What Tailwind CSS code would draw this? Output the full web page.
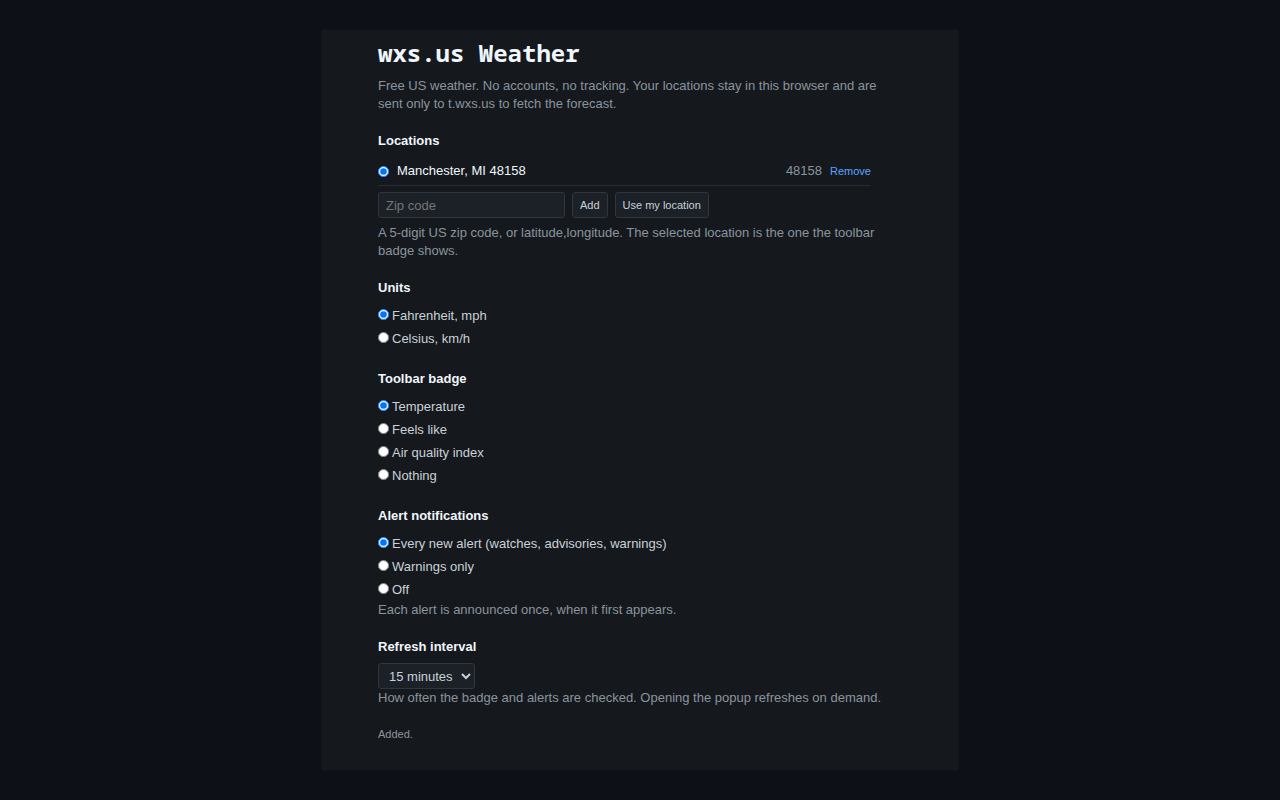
<!DOCTYPE html>
<html lang="en">
<head>
  <meta charset="UTF-8">
  <meta name="viewport" content="width=device-width, initial-scale=1.0">
  <title>wxs.us Weather</title>
  <script src="https://cdn.jsdelivr.net/npm/@tailwindcss/browser@4"></script>
</head>
<body class="bg-[#0d1017] text-[#c9d1d9] font-['Liberation_Sans',Arial,sans-serif] text-[13px] leading-[18px] min-h-screen px-4 py-[30px]">

<!-- Options panel -->
<main class="w-full max-w-[638px] mx-auto bg-[#15191d] pl-[57px] pr-[88px] pt-[7px] pb-[27px]">

  <h1 class="text-[24px] leading-8 font-bold text-[#f0f6fc] font-['Noto_Sans_Mono','DejaVu_Sans_Mono',monospace]">wxs.us Weather</h1>
  <p class="mt-2 -mr-3 text-[#8b949e]">Free US weather. No accounts, no tracking. Your locations stay in this browser and are sent only to t.wxs.us to fetch the forecast.</p>

  <!-- Locations -->
  <section class="mt-[18px]">
    <h2 class="leading-5 font-bold text-[#f0f6fc]">Locations</h2>
    <ul class="mt-[7px]">
      <li class="flex items-center gap-2 h-7 pb-px border-b border-[#262b31]">
        <input type="radio" id="loc-48158" name="location" class="w-[11px] h-[11px]" checked>
        <label for="loc-48158" class="flex-1 text-[#f0f6fc]">Manchester, MI 48158</label>
        <span class="text-[#8b949e]">48158</span>
        <button type="button" class="text-[11px] text-[#58a6ff]">Remove</button>
      </li>
    </ul>
    <form class="flex gap-[7px] mt-[6px]">
      <input type="text" id="zip" aria-label="Zip code" placeholder="Zip code" class="w-[187px] h-[26px] px-[7px] bg-[#1c2128] border border-[#30363d] rounded-[3px] placeholder:text-[#757575]">
      <button type="button" class="h-[26px] px-[7px] text-[11px] bg-[#1c2128] border border-[#30363d] rounded-[3px]">Add</button>
      <button type="button" class="h-[26px] px-[7px] text-[11px] bg-[#1c2128] border border-[#30363d] rounded-[3px]">Use my location</button>
    </form>
    <p class="mt-[6px] -mr-3 text-[#8b949e]">A 5-digit US zip code, or latitude,longitude. The selected location is the one the toolbar badge shows.</p>
  </section>

  <!-- Units -->
  <section class="mt-[18px]">
    <h2 class="leading-5 font-bold text-[#f0f6fc]">Units</h2>
    <div class="mt-[7px] flex flex-col gap-px leading-[22px]">
      <label class="flex items-baseline gap-[3px]"><input type="radio" name="units" class="w-[11px] h-[11px]" checked>Fahrenheit, mph</label>
      <label class="flex items-baseline gap-[3px]"><input type="radio" name="units" class="w-[11px] h-[11px]">Celsius, km/h</label>
    </div>
  </section>

  <!-- Toolbar badge -->
  <section class="mt-[19px]">
    <h2 class="leading-5 font-bold text-[#f0f6fc]">Toolbar badge</h2>
    <div class="mt-[7px] flex flex-col gap-px leading-[22px]">
      <label class="flex items-baseline gap-[3px]"><input type="radio" name="badge" class="w-[11px] h-[11px]" checked>Temperature</label>
      <label class="flex items-baseline gap-[3px]"><input type="radio" name="badge" class="w-[11px] h-[11px]">Feels like</label>
      <label class="flex items-baseline gap-[3px]"><input type="radio" name="badge" class="w-[11px] h-[11px]">Air quality index</label>
      <label class="flex items-baseline gap-[3px]"><input type="radio" name="badge" class="w-[11px] h-[11px]">Nothing</label>
    </div>
  </section>

  <!-- Alerts -->
  <section class="mt-[19px]">
    <h2 class="leading-5 font-bold text-[#f0f6fc]">Alert notifications</h2>
    <div class="mt-[7px] flex flex-col gap-px leading-[22px]">
      <label class="flex items-baseline gap-[3px]"><input type="radio" name="alerts" class="w-[11px] h-[11px]" checked>Every new alert (watches, advisories, warnings)</label>
      <label class="flex items-baseline gap-[3px]"><input type="radio" name="alerts" class="w-[11px] h-[11px]">Warnings only</label>
      <label class="flex items-baseline gap-[3px]"><input type="radio" name="alerts" class="w-[11px] h-[11px]">Off</label>
    </div>
    <p class="-mr-3 text-[#8b949e]">Each alert is announced once, when it first appears.</p>
  </section>

  <!-- Refresh -->
  <section class="mt-[18px]">
    <h2 class="leading-5 font-bold text-[#f0f6fc]"><label for="interval">Refresh interval</label></h2>
    <select id="interval" class="block mt-[6px] w-[97px] h-[26px] pl-[6px] bg-[#1c2128] border border-[#30363d] rounded-[3px]">
      <option>5 minutes</option>
      <option selected>15 minutes</option>
      <option>30 minutes</option>
      <option>60 minutes</option>
    </select>
    <p class="-mr-3 text-[#8b949e]">How often the badge and alerts are checked. Opening the popup refreshes on demand.</p>
  </section>

  <p id="status" class="mt-[18px] text-[11px] text-[#8b949e]">Added.</p>

</main>

</body>
</html>
